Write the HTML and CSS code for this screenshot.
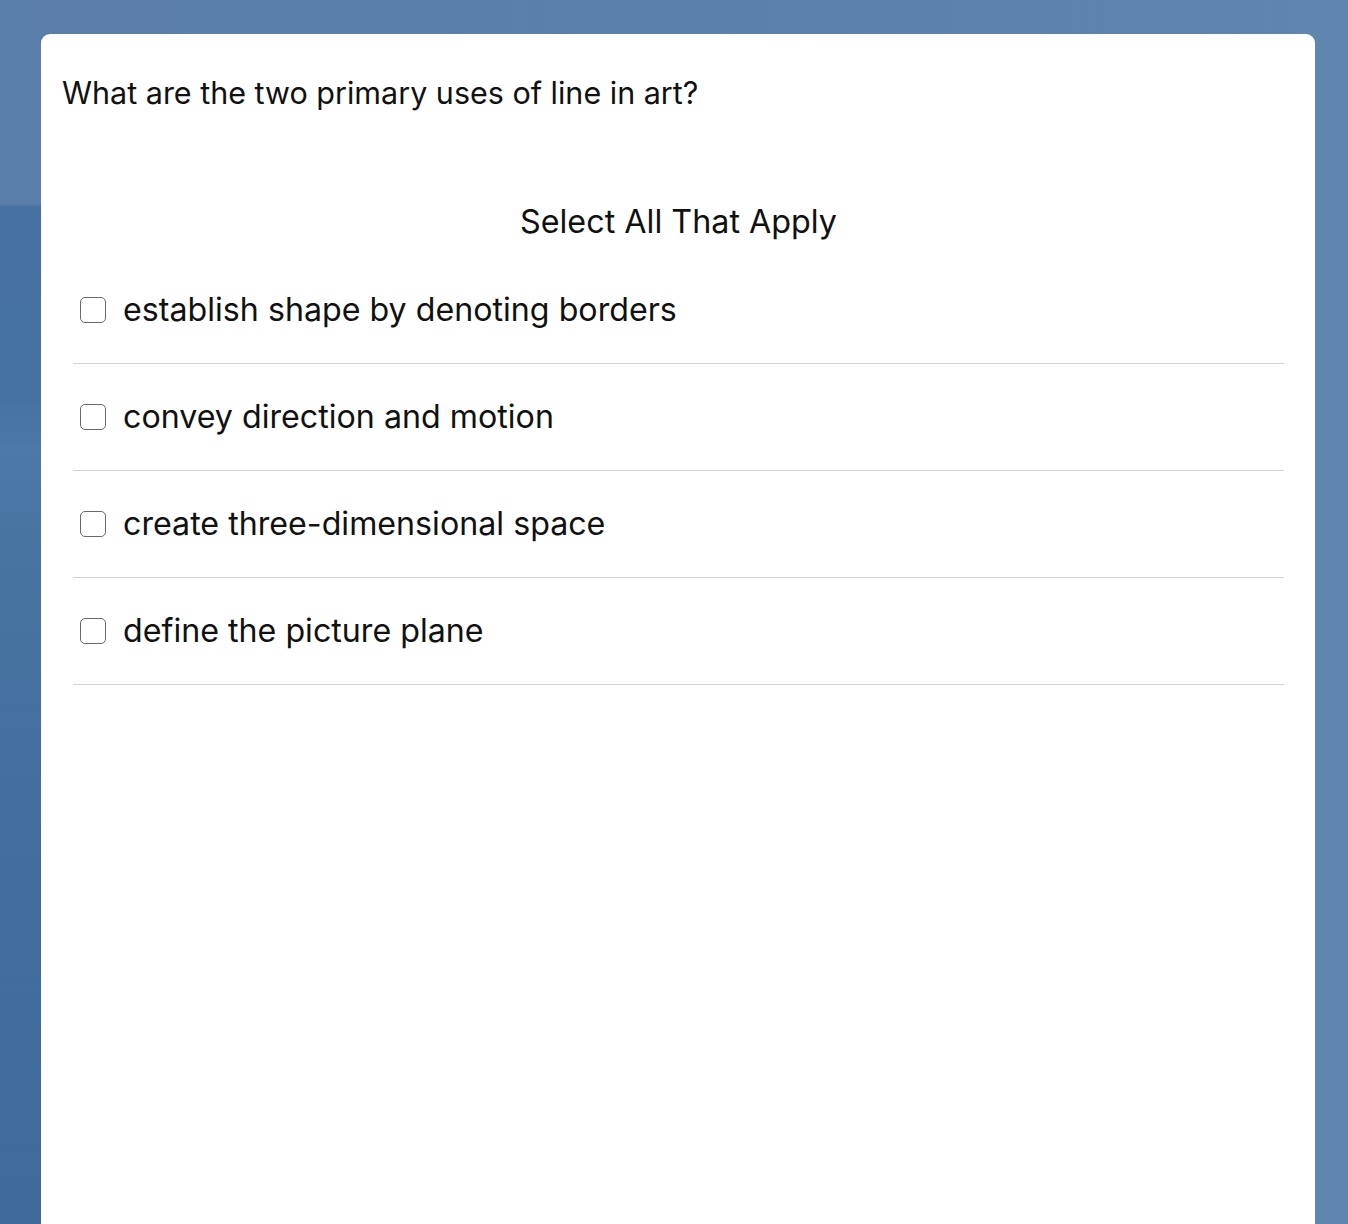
FILE: index.html
```html
<!DOCTYPE html>
<html>
<head>
<meta charset="utf-8">
<link rel="stylesheet" href="styles.css">
</head>
<body>
<div class="card">
  <div class="question">What are the two primary uses of line in art?</div>
  <div class="instruction">Select All That Apply</div>
  <ul class="options">
    <li class="option"><span class="box"></span><span class="label">establish shape by denoting borders</span></li>
    <li class="option"><span class="box"></span><span class="label">convey direction and motion</span></li>
    <li class="option"><span class="box"></span><span class="label">create three-dimensional space</span></li>
    <li class="option"><span class="box"></span><span class="label">define the picture plane</span></li>
  </ul>
</div>
</body>
</html>
```

FILE: styles.css
```css
html, body {
  margin: 0;
  height: 100%;
}
body {
  background:
    linear-gradient(180deg, #5a7eaa 0, #5a7fab 203px, #45709f 208px, #4672a1 400px, #4c79a8 450px, #4874a2 540px, #436e9d 800px, #3f6a99 100%) 0 0 / 41px 100% no-repeat,
    linear-gradient(90deg, #5a7ea8 0%, #5a80ab 50%, #5f86ae 100%);
  font-family: Inter, "Liberation Sans", sans-serif;
  color: #111;
  overflow: hidden;
}
.card {
  margin: 34px 33px 0 41px;
  background: #fff;
  border-radius: 9px 9px 0 0;
  height: calc(100% - 34px);
  padding: 0 31px 0 32px;
  box-sizing: border-box;
}
.question {
  padding-top: 41px;
  margin-left: -11px;
  font-size: 30.5px;
  line-height: 36px;
}
.instruction {
  text-align: center;
  font-size: 32.3px;
  line-height: 40px;
  margin-top: 91px;
}
.options {
  list-style: none;
  margin: 15px 0 0;
  padding: 0;
}
.option {
  display: flex;
  align-items: center;
  height: 106px;
  border-bottom: 1px solid #d3d3d3;
  font-size: 32.2px;
}
.box {
  width: 24px;
  height: 24px;
  border: 1.5px solid #6a6a6a;
  border-radius: 5px;
  margin: 0 17px 0 7px;
  flex: none;
}
.label {
  line-height: 40px;
}
```
